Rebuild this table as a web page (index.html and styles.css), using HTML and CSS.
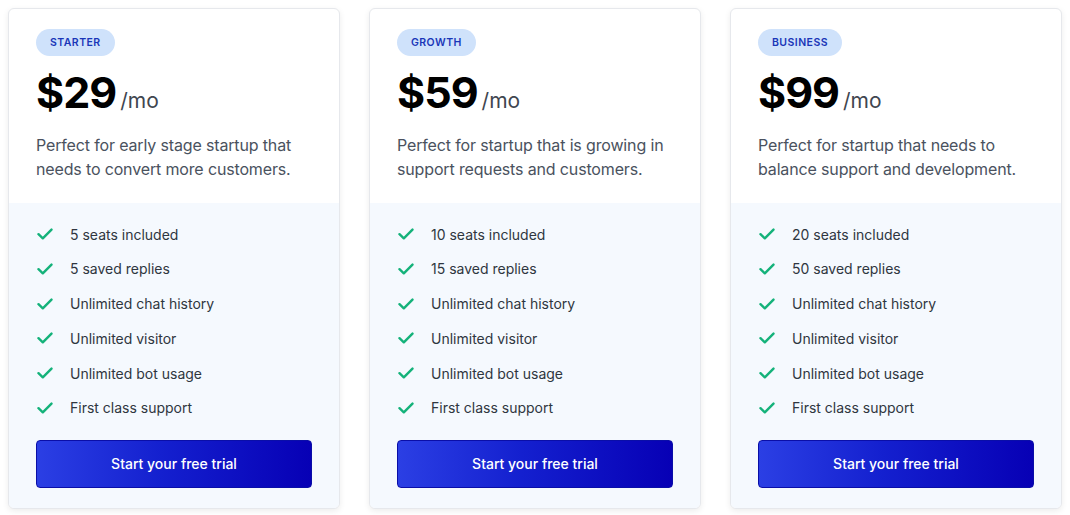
FILE: index.html
```html
<!DOCTYPE html>
<html>
<head>
<meta charset="utf-8">
<link rel="stylesheet" href="styles.css">
</head>
<body>
<div class="plans">
  <div class="card">
    <div class="top">
      <span class="badge">STARTER</span>
      <div class="price"><span class="amount">$29</span><span class="per">/mo</span></div>
      <p class="desc">Perfect for early stage startup that needs to convert more customers.</p>
    </div>
    <div class="bottom">
      <ul class="features">
        <li><svg class="check" viewBox="0 0 16 12"><path d="M1.5 6.2 L5.8 10.3 L14.5 1.6"/></svg>5 seats included</li>
        <li><svg class="check" viewBox="0 0 16 12"><path d="M1.5 6.2 L5.8 10.3 L14.5 1.6"/></svg>5 saved replies</li>
        <li><svg class="check" viewBox="0 0 16 12"><path d="M1.5 6.2 L5.8 10.3 L14.5 1.6"/></svg>Unlimited chat history</li>
        <li><svg class="check" viewBox="0 0 16 12"><path d="M1.5 6.2 L5.8 10.3 L14.5 1.6"/></svg>Unlimited visitor</li>
        <li><svg class="check" viewBox="0 0 16 12"><path d="M1.5 6.2 L5.8 10.3 L14.5 1.6"/></svg>Unlimited bot usage</li>
        <li><svg class="check" viewBox="0 0 16 12"><path d="M1.5 6.2 L5.8 10.3 L14.5 1.6"/></svg>First class support</li>
      </ul>
      <button class="cta">Start your free trial</button>
    </div>
  </div>
  <div class="card">
    <div class="top">
      <span class="badge">GROWTH</span>
      <div class="price"><span class="amount">$59</span><span class="per">/mo</span></div>
      <p class="desc">Perfect for startup that is growing in support requests and customers.</p>
    </div>
    <div class="bottom">
      <ul class="features">
        <li><svg class="check" viewBox="0 0 16 12"><path d="M1.5 6.2 L5.8 10.3 L14.5 1.6"/></svg>10 seats included</li>
        <li><svg class="check" viewBox="0 0 16 12"><path d="M1.5 6.2 L5.8 10.3 L14.5 1.6"/></svg>15 saved replies</li>
        <li><svg class="check" viewBox="0 0 16 12"><path d="M1.5 6.2 L5.8 10.3 L14.5 1.6"/></svg>Unlimited chat history</li>
        <li><svg class="check" viewBox="0 0 16 12"><path d="M1.5 6.2 L5.8 10.3 L14.5 1.6"/></svg>Unlimited visitor</li>
        <li><svg class="check" viewBox="0 0 16 12"><path d="M1.5 6.2 L5.8 10.3 L14.5 1.6"/></svg>Unlimited bot usage</li>
        <li><svg class="check" viewBox="0 0 16 12"><path d="M1.5 6.2 L5.8 10.3 L14.5 1.6"/></svg>First class support</li>
      </ul>
      <button class="cta">Start your free trial</button>
    </div>
  </div>
  <div class="card">
    <div class="top">
      <span class="badge">BUSINESS</span>
      <div class="price"><span class="amount">$99</span><span class="per">/mo</span></div>
      <p class="desc">Perfect for startup that needs to balance support and development.</p>
    </div>
    <div class="bottom">
      <ul class="features">
        <li><svg class="check" viewBox="0 0 16 12"><path d="M1.5 6.2 L5.8 10.3 L14.5 1.6"/></svg>20 seats included</li>
        <li><svg class="check" viewBox="0 0 16 12"><path d="M1.5 6.2 L5.8 10.3 L14.5 1.6"/></svg>50 saved replies</li>
        <li><svg class="check" viewBox="0 0 16 12"><path d="M1.5 6.2 L5.8 10.3 L14.5 1.6"/></svg>Unlimited chat history</li>
        <li><svg class="check" viewBox="0 0 16 12"><path d="M1.5 6.2 L5.8 10.3 L14.5 1.6"/></svg>Unlimited visitor</li>
        <li><svg class="check" viewBox="0 0 16 12"><path d="M1.5 6.2 L5.8 10.3 L14.5 1.6"/></svg>Unlimited bot usage</li>
        <li><svg class="check" viewBox="0 0 16 12"><path d="M1.5 6.2 L5.8 10.3 L14.5 1.6"/></svg>First class support</li>
      </ul>
      <button class="cta">Start your free trial</button>
    </div>
  </div>
</div>
</body>
</html>
```
FILE: styles.css
```css
* { box-sizing: border-box; }
html, body { margin: 0; background: #ffffff; }
body {
  padding: 8px;
  font-family: Inter, "Noto Sans", sans-serif;
  color: #111827;
}
.plans {
  display: grid;
  grid-template-columns: repeat(3, 332px);
  column-gap: 29px;
}
.card {
  border: 1px solid #e6e8ec;
  border-radius: 6px;
  background: #ffffff;
  overflow: hidden;
  box-shadow: 0 2px 6px rgba(0, 0, 0, 0.08);
  display: flex;
  flex-direction: column;
  height: 501px;
}
.top {
  padding: 20px 27px 0 27px;
  height: 194px;
}
.badge {
  display: inline-block;
  height: 27px;
  line-height: 27px;
  padding: 0 14px;
  border-radius: 14px;
  background: #cfe2fb;
  color: #1a36b8;
  font-size: 10.5px;
  font-weight: 600;
  letter-spacing: 0.45px;
}
.price {
  margin-top: 12px;
  display: flex;
  align-items: baseline;
  height: 48px;
}
.amount {
  font-family: Inter, "Noto Sans", sans-serif;
  font-weight: 700;
  font-size: 43px;
  line-height: 48px;
  color: #000000;
  letter-spacing: -1px;
}
.per {
  font-size: 21px;
  color: #3f4650;
  margin-left: 4px;
}
.desc {
  margin: 17px 0 0 0;
  font-size: 16px;
  line-height: 24px;
  letter-spacing: -0.15px;
  color: #4a525e;
}
.bottom {
  flex: 1;
  background: #f5f9fe;
  padding: 20px 27px 20px 27px;
  display: flex;
  flex-direction: column;
}
.features {
  list-style: none;
  margin: 0;
  padding: 0;
  display: flex;
  flex-direction: column;
  gap: 12.8px;
}
.features li {
  display: flex;
  align-items: center;
  height: 22px;
  font-size: 14px;
  color: #2f3640;
}
.check {
  width: 16px;
  height: 12px;
  margin-left: 1px;
  margin-right: 17px;
  fill: none;
  stroke: #14b27a;
  stroke-width: 2.4;
  stroke-linecap: round;
  stroke-linejoin: round;
}
.cta {
  margin-top: 21px;
  height: 48px;
  width: 100%;
  border: 1px solid #0a0ea8;
  border-radius: 4px;
  background: linear-gradient(90deg, #2b3fe4 0%, #1420cf 45%, #0700b5 100%);
  color: #ffffff;
  font-family: Inter, "Noto Sans", sans-serif;
  font-size: 14px;
  font-weight: 500;
}
```
